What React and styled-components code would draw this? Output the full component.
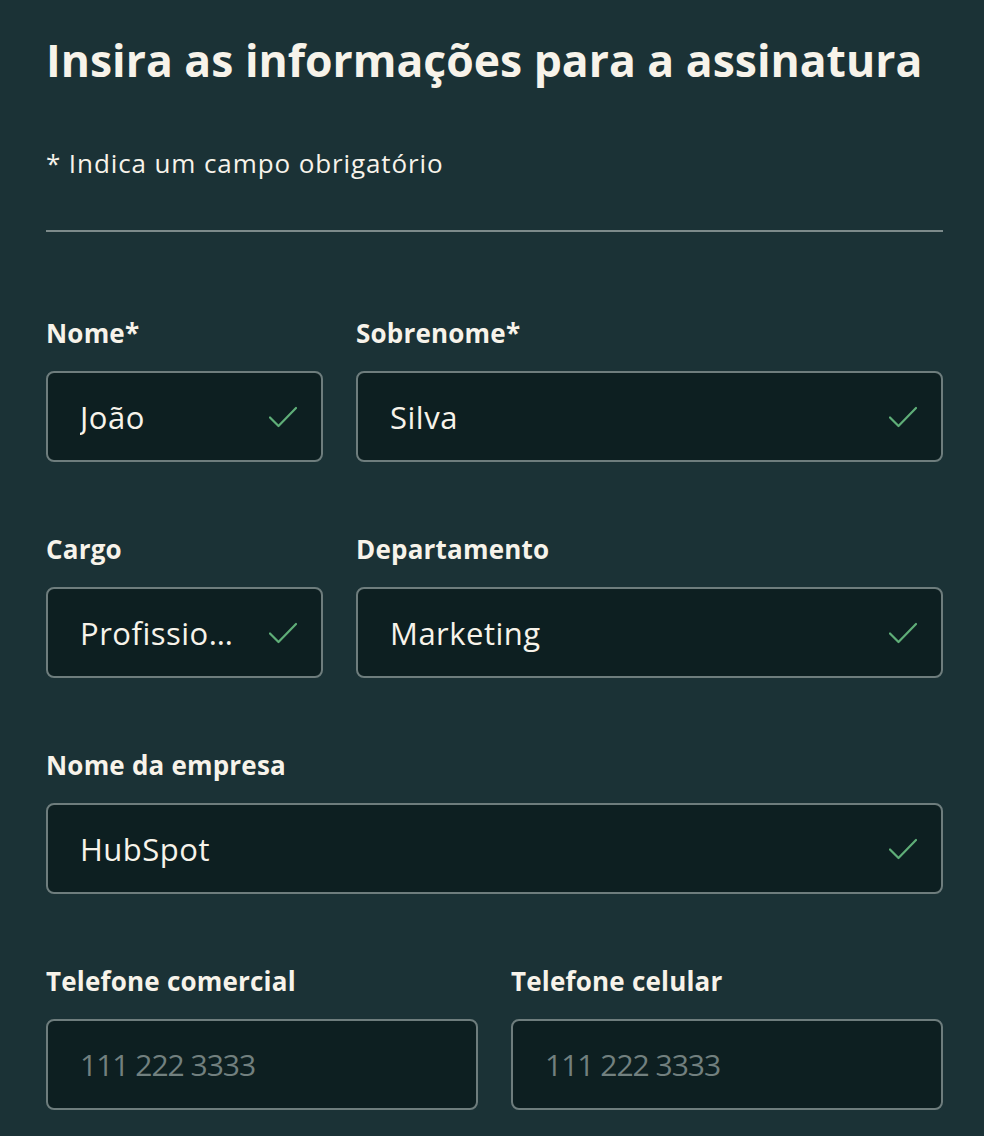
import React from 'react';
import styled, {createGlobalStyle} from 'styled-components';

const GlobalStyle = createGlobalStyle`
  html, body {
    margin: 0;
    padding: 0;
    background: #1b3236;
  }
  body {
    font-family: "Open Sans", "Noto Sans", sans-serif;
    color: #f7f3ea;
  }
`;

const rows = [
    [
        {label: 'Nome*', value: 'João', width: 277},
        {label: 'Sobrenome*', value: 'Silva'},
    ],
    [
        {label: 'Cargo', value: 'Profissional de marketing', width: 277},
        {label: 'Departamento', value: 'Marketing'},
    ],
    [
        {label: 'Nome da empresa', value: 'HubSpot'},
    ],
    [
        {label: 'Telefone comercial', placeholder: '111 222 3333'},
        {label: 'Telefone celular', placeholder: '111 222 3333'},
    ],
];

const Check = () => (
    <CheckSvg viewBox="0 0 28 22" width="28" height="22">
        <path d="M1 11.5 L9.5 20 L27 2" fill="none" stroke="#5fae78" strokeWidth="2.2" strokeLinecap="round" strokeLinejoin="round" />
    </CheckSvg>
);

const Field = ({label, value, placeholder, width}) => (
    <FieldBox $width={width}>
        <Label>{label}</Label>
        <InputBox>
            {value ? <Value>{value}</Value> : <Placeholder>{placeholder}</Placeholder>}
            {value && <Check />}
        </InputBox>
    </FieldBox>
);

export default () => (
    <>
        <GlobalStyle />
        <Page>
            <Title>Insira as informações para a assinatura</Title>
            <Note>* Indica um campo obrigatório</Note>
            <Divider />
            <Form>
                {rows.map((row, idx) =>
                    <Row key={idx}>
                        {row.map(f => <Field key={f.label} {...f} />)}
                    </Row>
                )}
            </Form>
        </Page>
    </>
);

const Page = styled.div`
  padding: 28px 41px 0 46px;
`;

const Title = styled.h1`
  margin: 0;
  font-size: 44.5px;
  font-weight: 700;
  line-height: 64px;
  letter-spacing: 0;
`;

const Note = styled.p`
  margin: 55px 0 0;
  font-size: 26px;
  line-height: 32px;
  letter-spacing: 0.9px;
`;

const Divider = styled.hr`
  margin: 51px 0 0;
  border: none;
  height: 2px;
  background: #7d8b8b;
`;

const Form = styled.div`
  display: flex;
  flex-direction: column;
  gap: 70px;
  margin-top: 84px;
`;

const Row = styled.div`
  display: flex;
  gap: 33px;
`;

const FieldBox = styled.div`
  display: flex;
  flex-direction: column;
  gap: 21px;
  flex: ${p => p.$width ? `0 0 ${p.$width}px` : '1 1 0'};
  min-width: 0;
`;

const Label = styled.label`
  font-size: 26px;
  font-weight: 700;
  line-height: 34px;
  letter-spacing: 0.2px;
`;

const InputBox = styled.div`
  box-sizing: border-box;
  height: 91px;
  display: flex;
  align-items: center;
  gap: 36px;
  padding: 0 24px 0 32px;
  background: #0d1f21;
  border: 2px solid #6e7d7d;
  border-radius: 8px;
`;

const Value = styled.span`
  flex: 1;
  min-width: 0;
  font-size: 31px;
  letter-spacing: 0.5px;
  white-space: nowrap;
  overflow: hidden;
  text-overflow: ellipsis;
`;

const Placeholder = styled(Value)`
  color: #72807f;
  font-size: 30px;
  letter-spacing: -1px;
`;

const CheckSvg = styled.svg`
  flex: none;
`;
